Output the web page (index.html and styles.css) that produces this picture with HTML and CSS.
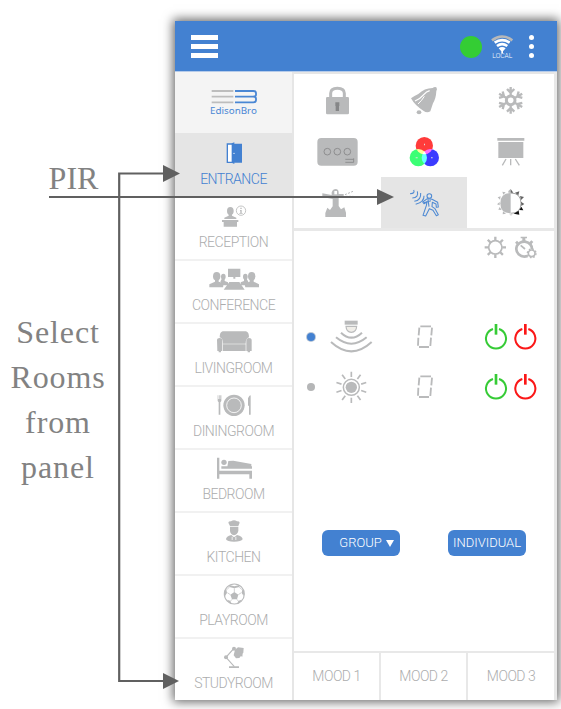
FILE: index.html
```html
<!DOCTYPE html>
<html lang="en">
<head>
<meta charset="utf-8">
<title>EdisonBro</title>
<link rel="stylesheet" href="styles.css">
</head>
<body>
<aside class="notes">
  <p class="note-pir">PIR</p>
  <p class="note-rooms">Select<br>Rooms<br>from<br>panel</p>
</aside>
<div class="phone">
  <header class="topbar">
    <div class="burger"><i></i><i></i><i></i></div>
    <div class="status">
      <span class="online"></span>
      <svg class="wifi" width="22" height="26" viewBox="388 72 66 78">
        <path d="M391 91Q421 68 452 91" fill="none" stroke="#b8b8b8" stroke-width="8"/>
        <path d="M399 98Q421 83 444 98M406 108Q421 97 437 108" fill="none" stroke="#fff" stroke-width="8"/>
        <path d="M411 115Q421 107 432 115L424 124V130H419V124Z" fill="#fff"/>
        <text x="392" y="143" textLength="60" lengthAdjust="spacingAndGlyphs" class="local">LOCAL</text>
      </svg>
      <div class="more"><i></i><i></i><i></i></div>
    </div>
  </header>
  <div class="body">
    <nav class="rooms">
      <div class="brand">
        <svg width="50" height="15" viewBox="129 238 150 45">
          <g fill="none" stroke-width="5.5">
            <path d="M137 244H202M137 261H202M137 278H202" stroke="#bdbdbd"/>
            <path d="M207 244H262Q270 244 270 251V255Q270 261 261 261H207M261 261Q270 261 270 267V271Q270 278 262 278H207" stroke="#4a87d4"/>
          </g>
        </svg>
        <span>EdisonBro</span>
      </div>
      <div class="room active">
        <svg width="50" height="22" viewBox="129 51 150 66"><path d="M184 57H202V112H184Z" fill="#fff" stroke="#4381d1" stroke-width="4"/><path d="M197 55L205 52V56H228V113H205V117L197 113Z" fill="#4381d1"/><circle cx="204" cy="85" r="2" fill="#fff"/></svg>
        <span>ENTRANCE</span>
      </div>
      <div class="room">
        <svg width="50" height="22" viewBox="129 240 150 66"><ellipse cx="193" cy="258" rx="10" ry="12"/><path d="M188 266H198V272L211 278V282H175V278L188 272ZM168 285H217V291H213V305H173V291H168Z"/><circle cx="225" cy="257" r="14" fill="none" stroke="#b9babb" stroke-width="2.5"/><path d="M223 248H227V252H223ZM222 255H227V264H230V266H220V264H223V257H222Z"/></svg>
        <span>RECEPTION</span>
      </div>
      <div class="room">
        <svg width="50" height="22" viewBox="129 54 150 66"><path d="M186 56H223V81H208V86H202V81H186ZM190 96H220L236 119H173Z"/><ellipse cx="152" cy="79" rx="11" ry="13"/><ellipse cx="172" cy="80" rx="7" ry="9"/><ellipse cx="257" cy="79" rx="11" ry="13"/><ellipse cx="238" cy="80" rx="7" ry="9"/><path d="M130 112V103L147 95V85H158V95L174 100L171 112ZM168 85H176V93L186 97V106H175L163 95ZM279 112V103L263 95V85H251V95L235 100L238 112ZM241 85H234V93L224 97V106H236L247 95Z"/></svg>
        <span>CONFERENCE</span>
      </div>
      <div class="room">
        <svg width="50" height="22" viewBox="129 243 150 66"><path d="M170 244H240Q249 246 249 262Q239 264 239 281H171Q171 264 161 262Q161 246 170 244ZM171 283H239V303H171Z"/><path d="M153 269Q153 264 161 264Q169 264 169 272V303H165V307H158V303H154ZM257 269Q257 264 249 264Q241 264 241 272V303H245V307H252V303H257Z"/></svg>
        <span>LIVINGROOM</span>
      </div>
      <div class="room">
        <svg width="50" height="22" viewBox="129 42 150 66"><circle cx="204" cy="76" r="32"/><circle cx="204" cy="76" r="22" fill="none" stroke="#fff" stroke-width="2.5"/><path d="M155 46H157V57H159V46H161V57H163V46H166V63L163 67V104H158V67L155 63ZM248 51Q250 46 254 46V104H249V77H246V55Z"/></svg>
        <span>DININGROOM</span>
      </div>
      <div class="room">
        <svg width="50" height="22" viewBox="129 231 150 66"><path d="M153 233H160V272H258V296H250V283H160V296H153ZM166 259H258V266H166ZM187 243L202 242L256 252V260H184Z"/><circle cx="174" cy="247" r="8"/></svg>
        <span>BEDROOM</span>
      </div>
      <div class="room">
        <svg width="50" height="22" viewBox="129 45 150 66"><path d="M192 63L187 53Q187 49 195 49Q204 42 213 49Q221 49 221 53L217 63ZM192 65H217V78Q215 88 204 91Q193 88 192 78ZM180 103Q180 94 196 90L204 97L213 90Q230 94 230 103Q226 110 204 110Q183 110 180 103Z"/><path d="M197 95H200V105H197ZM208 95H211V105H208Z" fill="#fff" opacity=".75"/></svg>
        <span>KITCHEN</span>
      </div>
      <div class="room">
        <svg width="50" height="22" viewBox="129 234 150 66"><circle cx="205" cy="267" r="30" fill="none" stroke="#b9babb" stroke-width="3.5"/><path d="M205 261L217 269L213 283H198L193 269ZM190 240L205 244L220 240V246L205 250L190 246ZM175 257L181 253L183 264L177 273ZM235 257L229 253L227 264L233 273ZM183 284L192 287L198 297L189 294ZM227 284L218 287L212 297L221 294Z"/><path d="M205 261V250M217 269L226 263M213 283L218 290M198 283L192 290M193 269L184 263M190 246L183 254M220 246L227 254" fill="none" stroke="#b9babb" stroke-width="2"/></svg>
        <span>PLAYROOM</span>
      </div>
      <div class="room">
        <svg width="50" height="22" viewBox="129 63 150 66"><path d="M203 71L180 97L205 125" fill="none" stroke="#b9babb" stroke-width="3.5"/><circle cx="204" cy="71" r="6"/><circle cx="180" cy="97" r="6"/><path d="M207 74L216 67L233 69L232 83L220 99L210 100L203 91ZM222 92L230 87L229 95ZM189 124H219V129H189Z"/></svg>
        <span>STUDYROOM</span>
      </div>
    </nav>
    <main class="panel">
      <section class="devices">
        <svg viewBox="387 192 261 156"><path d="M497 266V250Q497 235 517 235Q538 235 538 250V266" fill="none" stroke="#b9babb" stroke-width="9"/><rect x="483" y="261" width="69" height="52" rx="4"/><path d="M511 277H523V288H522V303H512V288H511Z" fill="#858687"/></svg>
        <svg viewBox="63 192 258 156"><path d="M153 265Q163 257 175 252Q193 234 218 234Q223 230 229 232Q233 238 229 243Q228 265 219 280L211 304Q201 310 190 302Q165 287 153 265Z"/><path d="M165 273Q181 266 192 253Q199 245 209 242" fill="none" stroke="#fff" stroke-width="4"/><path d="M174 282Q186 271 193 259" fill="none" stroke="#fff" stroke-width="3"/><ellipse cx="177" cy="307" rx="7" ry="6"/></svg>
        <svg viewBox="321 192 261 156"><g fill="none" stroke="#b9babb" stroke-width="7"><circle cx="452" cy="271" r="13" stroke-width="9"/><g id="flake"><path d="M452 257V231M441 237L452 248L463 237"/><path d="M452 285V311M441 305L452 294L463 305"/></g><use href="#flake" transform="rotate(60 452 271)"/><use href="#flake" transform="rotate(120 452 271)"/></g></svg>
        <svg viewBox="387 3 261 153"><rect x="457" y="39" width="121" height="83" rx="12"/><g fill="none" stroke="#858687" stroke-width="2.5"><circle cx="487" cy="80" r="10"/><circle cx="517" cy="80" r="10"/><circle cx="547" cy="80" r="10"/><path d="M541 103H566M541 112H566V100"/></g></svg>
        <svg class="rgb" viewBox="63 3 258 153"><circle cx="193" cy="62" r="26" fill="#ff3b3b"/><circle cx="175" cy="98" r="26" fill="#3bff75"/><circle cx="211" cy="98" r="26" fill="#3b3bff"/><path d="M192 56H195V61H192ZM167 97H173V100H167ZM213 97H218V100H213Z" fill="#ddd"/></svg>
        <svg viewBox="321 3 261 153"><path d="M412 39H493V47H412ZM415 51H490V99H415Z"/><path d="M438 102L427 121M452 102V121M466 102L478 121" fill="none" stroke="#b9babb" stroke-width="4"/></svg>
        <svg viewBox="387 156 261 153"><path d="M472 205L500 210V202Q504 192 512 192Q521 192 521 203V207H536V219H521V243L528 253L538 247L543 263V276H481V264L487 248L495 255L503 244V222L472 216Z"/><path d="M508 198H516V208H508Z" fill="#fff"/><path d="M540 209L564 199M542 214H565" fill="none" stroke="#b9babb" stroke-width="3" stroke-dasharray="6 4"/></svg>
        <svg class="on" viewBox="63 156 258 153"><g fill="none" stroke="#4f8ad3" stroke-width="3.2" stroke-linejoin="round"><path d="M161 195Q166 206 150 206M172 199Q177 218 157 219M182 204Q184 226 163 229M192 212Q193 231 167 238"/><circle cx="208" cy="213" r="7"/><path d="M202 221L188 231L192 236L201 231L199 242L189 271L197 273L208 251L219 256L229 272L235 269L225 251L216 245L217 232L228 237L229 247L235 246L233 232L216 223Z"/><path d="M204 224L207 245M191 233L213 227"/></g></svg>
        <svg viewBox="321 156 261 153"><path d="M452 204V265Q421 265 421 235Q421 204 452 204Z"/><path d="M452 204Q483 204 483 235Q483 265 452 265" fill="none" stroke="#777" stroke-width="2"/><path d="M445 203V198L452 192V203ZM430 209L427 200L437 202ZM420 224L413 217L422 214ZM419 241L411 238L419 231ZM425 255L415 254L419 246ZM438 266L428 268L429 259Z"/><path d="M452 192L460 203H452ZM465 203L478 199L475 211ZM480 213L492 216L483 225ZM483 230L493 237L484 243Z" fill="#636363"/><path d="M484 245L490 256L478 255ZM476 257L478 269L461 266Z" fill="#111"/><path d="M447 266H459L453 273Z" fill="#ddd"/></svg>
      </section>
      <section class="control">
        <svg class="tools" width="74" height="34" viewBox="360 318 222 102"><circle cx="406" cy="367" r="20" fill="none" stroke="#b9babb" stroke-width="5"/><g fill="none" stroke="#b9babb" stroke-width="7"><path id="tooth" d="M406 346V335M406 388V399"/><use href="#tooth" transform="rotate(45 406 367)"/><use href="#tooth" transform="rotate(90 406 367)"/><use href="#tooth" transform="rotate(135 406 367)"/></g><path d="M482 335H501V340H496V349H487V340H482ZM465 353L471 347L476 352L470 358ZM508 352L514 346L520 351L514 358Z"/><path d="M503 393Q487 398 476 388Q465 377 471 362Q480 349 495 350Q516 354 516 373" fill="none" stroke="#b9babb" stroke-width="8"/><path d="M482 361L495 372" fill="none" stroke="#b9babb" stroke-width="5"/><circle cx="515" cy="385" r="10" fill="#fff" stroke="#b9babb" stroke-width="5"/><circle cx="515" cy="385" r="13" fill="none" stroke="#b9babb" stroke-width="4" stroke-dasharray="5 5.2"/></svg>
        <div class="sensor">
          <span class="dot selected"></span>
          <svg width="50" height="50" viewBox="93 36 150 150"><path d="M149 62H188V74H149Z"/><path d="M153 79H185Q184 97 169 97Q154 97 153 79Z" fill="#f0eee9" stroke="#b9babb" stroke-width="3.5"/><path d="M138 98Q169 128 201 98M123 112Q169 150 215 112M108 126Q169 182 230 126" fill="none" stroke="#b9babb" stroke-width="6"/></svg>
          <svg width="94" height="50" viewBox="243 36 282 150"><path id="zero" d="M376 79H408M411 83L409 106M408 113L406 138M402 141H372M369 137L370 113M371 106L373 83" fill="none" stroke="#b9babb" stroke-width="5.5"/></svg>
          <svg width="84" height="50" viewBox="525 36 252 150"><g id="power" fill="none" stroke-width="6"><path d="M594 87A30 30 0 1 0 612 87" stroke="#36cb36"/><path d="M603 72V104" stroke="#36cb36" stroke-width="8"/><path d="M682 87A30 30 0 1 0 700 87" stroke="#fb1717"/><path d="M691 72V104" stroke="#fb1717" stroke-width="8"/></g></svg>
        </div>
        <div class="sensor">
          <span class="dot"></span>
          <svg width="50" height="50" viewBox="93 186 150 150"><circle cx="169" cy="262" r="17"/><g fill="none" stroke="#b9babb" stroke-width="5"><circle cx="169" cy="262" r="24" stroke-width="4.5"/><path id="ray" d="M169 231V215M169 293V309"/><use href="#ray" transform="rotate(36 169 262)"/><use href="#ray" transform="rotate(72 169 262)"/><use href="#ray" transform="rotate(108 169 262)"/><use href="#ray" transform="rotate(144 169 262)"/></g></svg>
          <svg width="94" height="50" viewBox="243 36 282 150"><use href="#zero"/></svg>
          <svg width="84" height="50" viewBox="525 36 252 150"><use href="#power"/></svg>
        </div>
        <div class="actions">
          <button class="group"><span>GROUP</span><svg width="8" height="7" viewBox="0 0 8 7"><path d="M0 0H8L4 7Z" fill="#fff"/></svg></button>
          <button><span>INDIVIDUAL</span></button>
        </div>
      </section>
      <footer class="moods"><span>MOOD 1</span><span>MOOD 2</span><span>MOOD 3</span></footer>
    </main>
  </div>
</div>
<svg class="arrows" width="561" height="709" viewBox="0 0 561 709">
  <path d="M165 173.5H119.2V681H165M49 197H379" fill="none" stroke="#606060" stroke-width="2.2"/>
  <path d="M163 165L180 173.5L163 182ZM163 673L179 681L163 689ZM377 189L394 197L377 205Z" fill="#606060"/>
</svg>
</body>
</html>
```
FILE: styles.css
```css
* { box-sizing: border-box; }
body {
  margin: 0;
  width: 561px;
  height: 709px;
  display: flex;
  position: relative;
  overflow: hidden;
  background: #fff;
  font-family: Roboto, "Liberation Sans", sans-serif;
  font-weight: 300;
}
svg { display: block; fill: #b9babb; }

.notes {
  width: 175px;
  flex: none;
  font: 400 32px/45px "Liberation Serif", serif;
  color: #828282;
}
.notes p { margin: 0; text-align: center; }
.notes .note-pir { padding: 156px 28px 0 0; }
.notes .note-rooms { padding: 109px 59px 0 0; letter-spacing: .9px; }

.phone {
  width: 382px;
  height: 679px;
  margin-top: 21px;
  flex: none;
  background: #fff;
  box-shadow: 0 0 10px 2px rgba(0, 0, 0, .6);
}
.topbar {
  height: 51px;
  padding: 0 23px 0 16px;
  display: flex;
  justify-content: space-between;
  background: #4381d1;
  border-bottom: 1px solid #b5cbea;
}
.burger { width: 27px; padding-top: 14px; display: flex; flex-direction: column; gap: 4px; }
.burger i { height: 5px; background: #fff; }
.status { display: flex; align-items: flex-start; }
.online { width: 22px; height: 22px; margin: 15px 9px 0 0; border-radius: 50%; background: #34cd34; }
.wifi { margin: 13px 16px 0 0; }
.local { font-size: 20px; fill: #fff; }
.more { padding-top: 14px; display: flex; flex-direction: column; gap: 4px; }
.more i { width: 5px; height: 5px; border-radius: 50%; background: #fff; }

.body { display: flex; height: 628px; }
.rooms { width: 119px; border-right: 2px solid #e6e6e6; }
.brand {
  height: 61px;
  padding-top: 17px;
  display: flex;
  flex-direction: column;
  align-items: center;
  background: #f4f4f4;
  font: 400 9.8px/14px "Noto Sans", sans-serif;
  color: #4a87d4;
}
.room {
  height: 63px;
  padding-top: 7px;
  border-top: 2px solid #f1f1f1;
  display: flex;
  flex-direction: column;
  align-items: center;
  gap: 7px;
  font-size: 14px;
  line-height: 16px;
  letter-spacing: -.5px;
  color: #acadae;
}
.active { background: #e5e5e5; border-color: #e5e5e5; color: #4381d1; }
.active + .room { border-color: #fff; }
.room span { white-space: nowrap; }

.panel { width: 263px; border-right: 3px solid #e8e8e8; }
.devices {
  height: 159px;
  display: grid;
  grid-template: 52px 51px 51px / 87px 86px 87px;
  border-top: 2px solid #e6e6e6;
  border-bottom: 3px solid #e8e8e8;
}
.devices svg { width: 100%; height: 100%; }
.devices .on { background: #e5e5e5; }
.rgb { isolation: isolate; }
.rgb circle { mix-blend-mode: screen; }

.control { height: 420px; }
.tools { margin: 0 0 47px 186px; }
.sensor { height: 50px; display: flex; align-items: center; }
.dot { width: 8px; height: 8px; margin: 0 11px 0 13px; border-radius: 50%; background: #b5b6b7; }
.selected { background: #4381d1; box-shadow: 0 0 0 1px #b9c6d6; }
.actions { margin: 118px 28px 0; display: flex; justify-content: space-between; }
.actions button {
  width: 78px;
  height: 26px;
  padding: 0;
  border: 0;
  border-radius: 6px;
  display: flex;
  align-items: center;
  justify-content: center;
  gap: 4px;
  background: #4381d1;
  color: #fff;
  font: 300 13px/26px Roboto, sans-serif;
}
.actions .group { padding-left: 11px; }

.moods {
  height: 49px;
  display: grid;
  grid-template-columns: 87px 87px 86px;
  border-top: 2px solid #e8e8e8;
  font-size: 14px;
  line-height: 47px;
  letter-spacing: -.5px;
  text-align: center;
  color: #acadae;
}
.moods span { border-right: 2px solid #e8e8e8; }
.moods span:last-child { border: 0; }

.arrows { position: absolute; left: 0; top: 0; }
```
